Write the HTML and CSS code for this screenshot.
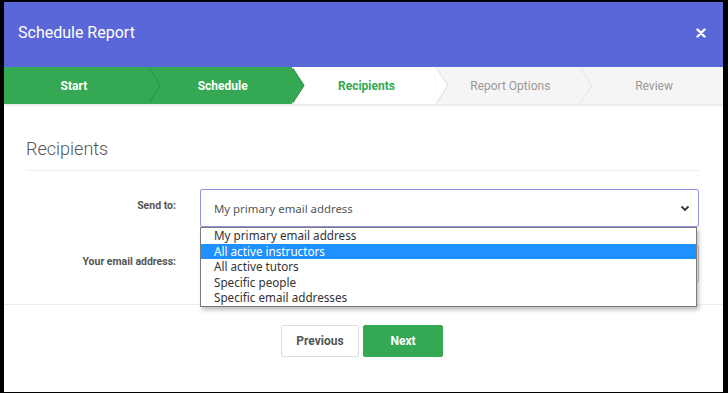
FILE: index.html
```html
<!DOCTYPE html>
<html lang="en">
<head>
  <meta charset="UTF-8">
  <meta name="viewport" content="width=device-width, initial-scale=1.0">
  <title>Schedule Report</title>
  <link rel="stylesheet" href="styles.css">
</head>
<body>
  <div class="modal">
    <div class="modal-header">
      <h1>Schedule Report</h1>
      <span class="close">
        <svg width="10" height="10" viewBox="0 0 10 10"><path d="M1.5 1.5 L8.5 8.5 M8.5 1.5 L1.5 8.5" stroke="#fff" stroke-width="2.4" stroke-linecap="round"/></svg>
      </span>
    </div>

    <div class="steps">
      <div class="step done first">Start</div>
      <div class="step done">Schedule</div>
      <div class="step active">Recipients</div>
      <div class="step todo">Report Options</div>
      <div class="step todo last">Review</div>
    </div>

    <div class="modal-body">
      <h2>Recipients</h2>

      <div class="row">
        <label>Send to:</label>
        <div class="select">
          <span>My primary email address</span>
          <svg width="10" height="7" viewBox="0 0 10 7"><path d="M1.5 1.5 L5 5 L8.5 1.5" fill="none" stroke="#333" stroke-width="1.8"/></svg>
          <ul class="options">
            <li>My primary email address</li>
            <li class="hover">All active instructors</li>
            <li>All active tutors</li>
            <li>Specific people</li>
            <li>Specific email addresses</li>
          </ul>
        </div>
      </div>

      <div class="row">
        <label>Your email address:</label>
        <div class="input"></div>
      </div>
    </div>

    <div class="modal-footer">
      <button class="btn">Previous</button>
      <button class="btn primary">Next</button>
    </div>
  </div>
</body>
</html>
```

FILE: styles.css
```css
* {
  box-sizing: border-box;
}
body {
  margin: 0;
  height: 393px;
  padding: 2px 5px 1px 4px;
  background-color: #000;
  font-family: Roboto, "Liberation Sans", sans-serif;
  overflow: hidden;
}
.modal {
  height: 390px;
  background-color: #fff;
  display: flex;
  flex-direction: column;
}

/* header */
.modal-header {
  height: 65px;
  background-color: #5a67d8;
  display: flex;
  align-items: center;
  justify-content: space-between;
  padding: 0 17px 0 14px;
}
.modal-header h1 {
  margin: -4px 0 0;
  font-size: 16px;
  font-weight: 400;
  color: #fff;
}
.close {
  display: flex;
  margin-top: -4px;
}

/* wizard steps */
.steps {
  display: flex;
  height: 39px;
  border-bottom: 2px solid #e9ecec;
}
.step {
  flex: 0 0 20%;
  position: relative;
  display: flex;
  align-items: center;
  justify-content: center;
  padding-left: 6px;
  font-size: 12px;
  font-weight: 700;
}
.step.first {
  padding-left: 0;
  padding-right: 4px;
}
.step::before,
.step::after {
  content: "";
  position: absolute;
  top: 0;
  width: 12px;
  height: 100%;
  clip-path: polygon(0 0, 100% 50%, 0 100%);
  z-index: 2;
}
.step::before {
  right: -13px;
}
.step::after {
  right: -12px;
}
.step.last::before,
.step.last::after {
  display: none;
}
.step.done {
  background-color: #34a853;
  color: #fff;
}
.step.done::before {
  background-color: #2a8c44;
}
.step.done::after {
  background-color: #34a853;
}
.step.active {
  background-color: #fff;
  color: #34a853;
}
.step.active::before {
  background-color: #dcdcdc;
}
.step.active::after {
  background-color: #fff;
}
.step.todo {
  background-color: #f5f5f5;
  color: #999;
  font-weight: 400;
}
.step.todo::before {
  background-color: #e2e2e2;
}
.step.todo::after {
  background-color: #f5f5f5;
}

/* body */
.modal-body {
  height: 199px;
  padding: 0 24px 0 22px;
  border-bottom: 1px solid #ececec;
}
.modal-body h2 {
  margin: 31px 0 0;
  padding-bottom: 9px;
  border-bottom: 1px solid #eee;
  font-size: 18px;
  font-weight: 300;
  line-height: 24px;
  color: #555;
}
.row {
  display: grid;
  grid-template-columns: 150px 1fr;
  column-gap: 24px;
  align-items: center;
  margin-top: 18px;
}
.row label {
  text-align: right;
  font-size: 10.5px;
  font-weight: 700;
  color: #555;
  margin-top: -5px;
}
.select {
  position: relative;
  height: 38px;
  border: 1px solid #8e94e0;
  border-radius: 2px;
  display: flex;
  align-items: center;
  justify-content: space-between;
  padding: 0 8px 0 13px;
  font-family: "Noto Sans", "Open Sans", sans-serif;
  font-size: 11.4px;
  color: #555;
  z-index: 3;
}
.input {
  height: 38px;
  border: 1px solid #ccc;
  border-radius: 2px;
}

/* open dropdown list */
.options {
  position: absolute;
  top: 37px;
  left: -1px;
  width: 497px;
  margin: 0;
  padding: 0;
  list-style: none;
  background-color: #fff;
  border: 1px solid #7a7a7a;
  box-shadow: 2px 3px 4px rgba(0, 0, 0, 0.25);
  font-size: 11.7px;
}
.options li {
  height: 15.6px;
  line-height: 15px;
  padding-left: 13px;
  color: #333;
}
.options li.hover {
  background-color: #1e90ff;
  color: #fff;
}

/* footer */
.modal-footer {
  display: flex;
  justify-content: center;
  gap: 4px;
  padding: 20px 3px 0 0;
}
.btn {
  height: 32px;
  width: 78px;
  border: 1px solid #ddd;
  border-radius: 2px;
  background-color: #fff;
  color: #555;
  font-family: Roboto, "Liberation Sans", sans-serif;
  font-size: 12px;
  font-weight: 700;
  cursor: pointer;
}
.btn.primary {
  width: 80px;
  border-color: #34a853;
  background-color: #34a853;
  color: #fff;
}
```
